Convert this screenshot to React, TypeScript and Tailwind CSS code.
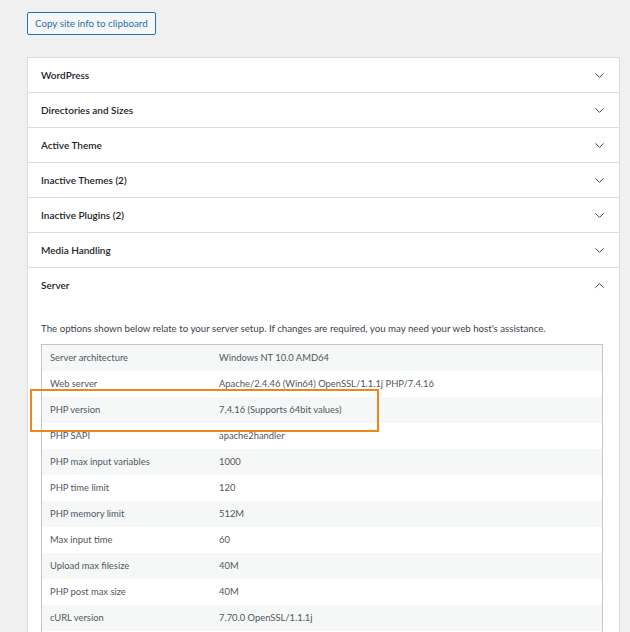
import { ChevronDown, ChevronUp } from "lucide-react";

const sections = [
  "WordPress",
  "Directories and Sizes",
  "Active Theme",
  "Inactive Themes (2)",
  "Inactive Plugins (2)",
  "Media Handling",
];

const serverInfo: [string, string][] = [
  ["Server architecture", "Windows NT 10.0 AMD64"],
  ["Web server", "Apache/2.4.46 (Win64) OpenSSL/1.1.1j PHP/7.4.16"],
  ["PHP version", "7.4.16 (Supports 64bit values)"],
  ["PHP SAPI", "apache2handler"],
  ["PHP max input variables", "1000"],
  ["PHP time limit", "120"],
  ["PHP memory limit", "512M"],
  ["Max input time", "60"],
  ["Upload max filesize", "40M"],
  ["PHP post max size", "40M"],
  ["cURL version", "7.70.0 OpenSSL/1.1.1j"],
  ["", ""],
];

function SectionHeader({ title, open }: { title: string; open?: boolean }) {
  return (
    <div
      className={`flex h-[35px] items-center justify-between pl-[13px] pr-[12px] ${open ? "" : "border-b border-[#dcdcde]"}`}
    >
      <span className="text-[10px] font-semibold text-[#1d2327]">{title}</span>
      {open ? (
        <ChevronUp size={15} strokeWidth={1.6} className="text-[#3c434a]" />
      ) : (
        <ChevronDown size={15} strokeWidth={1.6} className="text-[#3c434a]" />
      )}
    </div>
  );
}

export default function App() {
  return (
    <div
      className="h-[632px] w-[630px] overflow-hidden bg-[#f0f0f1] pl-[27px] pt-[12px]"
      style={{ fontFamily: 'Lato, "Liberation Sans", sans-serif' }}
    >
      <button className="block h-[23px] rounded-[2px] border border-[#2271b1] bg-[#f6f7f7] px-[7px] text-[9.8px] text-[#2271b1]">
        Copy site info to clipboard
      </button>

      <div className="mt-[22px] w-[593px] border border-[#dcdcde] bg-white">
        {sections.map((s) => (
          <SectionHeader key={s} title={s} />
        ))}
        <SectionHeader title="Server" open />

        <div className="px-[13px] pt-[18px]">
          <p className="text-[9.7px] leading-[14px] text-[#3c434a]">
            The options shown below relate to your server setup. If changes are required, you may need your web host's assistance.
          </p>
          <div className="relative mt-[9px] w-[562px] border border-[#c3c4c7]">
            {serverInfo.map(([label, value], i) => (
              <div
                key={i}
                className={`flex h-[26px] items-center text-[9.4px] text-[#50575e] ${i % 2 === 0 ? "bg-[#f6f7f7]" : "bg-white"}`}
              >
                <span className="w-[177px] pl-[8px]">{label}</span>
                <span>{value}</span>
              </div>
            ))}
            <div className="pointer-events-none absolute left-[-12px] top-[44px] h-[43px] w-[349px] border-2 border-[#f0851c]" />
          </div>
        </div>
      </div>
    </div>
  );
}
